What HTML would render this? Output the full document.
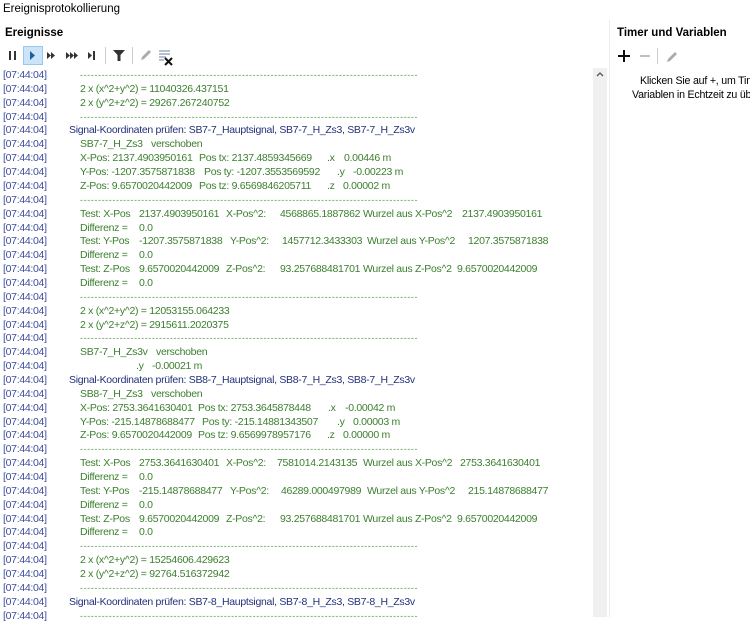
<!DOCTYPE html>
<html><head><meta charset="utf-8">
<style>
*{margin:0;padding:0;box-sizing:border-box}
body{width:750px;height:617px;overflow:hidden;background:#fff;font-family:"Liberation Sans",sans-serif;position:relative;color:#000}
.a{position:absolute;white-space:pre}
.r{position:absolute;left:0;height:14px;line-height:14px;font-size:10.5px;letter-spacing:-0.3px;white-space:pre;width:590px;overflow:hidden}
.r span{position:absolute;top:0}
.t{left:3px;color:#3d4c9c}
.g{color:#3b7f2e}
.n{color:#22307a}
.d{left:80px;color:#5a9a4e;width:338px;overflow:hidden;letter-spacing:0.6px;font-size:9px}
</style></head><body>
<div class="a" style="left:3px;top:3px;font-size:11.5px">Ereignisprotokollierung</div>
<div class="a" style="left:5px;top:27px;font-size:11.5px;font-weight:bold">Ereignisse</div>
<div class="a" style="left:617px;top:27px;font-size:11.5px;font-weight:bold">Timer und Variablen</div>
<div class="a" style="left:609px;top:20px;width:1px;height:597px;background:#ececec"></div>

<svg class="a" style="left:0;top:44px" width="190" height="24">
<rect x="9" y="7" width="2" height="9" fill="#333"/><rect x="14" y="7" width="2" height="9" fill="#333"/>
<rect x="23.5" y="2.5" width="19" height="18" fill="#cce4f7" stroke="#99c9ef"/>
<path d="M30 7 L35 11.5 L30 16Z" fill="#1e5fa0"/>
<path d="M47 8 L51 11.5 L47 15Z M51 8 L55 11.5 L51 15Z" fill="#333"/>
<path d="M66 8 L70 11.5 L66 15Z M70 8 L74 11.5 L70 15Z M74 8 L78 11.5 L74 15Z" fill="#333"/>
<path d="M88 8 L92 11.5 L88 15Z" fill="#333"/><rect x="93" y="7" width="2" height="9" fill="#333"/>
<rect x="105" y="3" width="1" height="17" fill="#ccc"/>
<path d="M113 6 H125 L120.5 11 V17 H117.5 V11Z" fill="#333"/>
<rect x="132" y="3" width="1" height="17" fill="#ccc"/>
<path d="M141 16 L142 13 L149 6 L151 8 L144 15Z" fill="#aaa"/>
<path d="M159 7 H170 M159 10 H170 M159 13 H166 M159 16 H164" stroke="#8a9ab0" stroke-width="1.2"/>
<path d="M165 14 L172 21 M172 14 L165 21" stroke="#111" stroke-width="2"/>
</svg>
<svg class="a" style="left:612px;top:46px" width="70" height="20">
<path d="M12 4 V16 M6 10 H18" stroke="#111" stroke-width="2"/>
<path d="M28 10 H38" stroke="#aaa" stroke-width="1.5"/>
<rect x="45" y="2" width="1" height="16" fill="#ccc"/>
<path d="M55 16 L56 13 L63 6 L65 8 L58 15Z" fill="#aaa"/>
</svg>
<div class="a" style="left:610px;top:70px;width:140px;height:40px;overflow:hidden">
<div class="a" style="left:30px;top:5px;font-size:10.6px;letter-spacing:-0.2px">Klicken Sie auf +, um Timer und</div>
<div class="a" style="left:22px;top:19px;font-size:10.6px;letter-spacing:-0.2px">Variablen in Echtzeit zu überwachen</div>
</div>

<div class="a" style="left:593px;top:68px;width:14px;height:549px;background:#f0f0f0"></div>
<svg class="a" style="left:595px;top:70px" width="10" height="10"><path d="M2 6 L5 3 L8 6" stroke="#555" stroke-width="1.3" fill="none"/></svg>

<div class="r" style="top:68px"><span class="t">[07:44:04]</span><span class="d">----------------------------------------------------------------------------------------------------------------</span></div>
<div class="r" style="top:81.9px"><span class="t">[07:44:04]</span><span class="g" style="left:80px">2 x (x^2+y^2) = 11040326.437151</span></div>
<div class="r" style="top:95.7px"><span class="t">[07:44:04]</span><span class="g" style="left:80px">2 x (y^2+z^2) = 29267.267240752</span></div>
<div class="r" style="top:109.6px"><span class="t">[07:44:04]</span><span class="d">----------------------------------------------------------------------------------------------------------------</span></div>
<div class="r" style="top:123.4px"><span class="t">[07:44:04]</span><span class="n" style="left:69px">Signal-Koordinaten prüfen: SB7-7_Hauptsignal, SB7-7_H_Zs3, SB7-7_H_Zs3v</span></div>
<div class="r" style="top:137.3px"><span class="t">[07:44:04]</span><span class="g" style="left:80px">SB7-7_H_Zs3</span><span class="g" style="left:151px">verschoben</span></div>
<div class="r" style="top:151.2px"><span class="t">[07:44:04]</span><span class="g" style="left:80px">X-Pos: 2137.4903950161</span><span class="g" style="left:199px">Pos tx: 2137.4859345669</span><span class="g" style="left:327px">.x</span><span class="g" style="left:344px">0.00446 m</span></div>
<div class="r" style="top:165px"><span class="t">[07:44:04]</span><span class="g" style="left:80px">Y-Pos: -1207.3575871838</span><span class="g" style="left:204px">Pos ty: -1207.3553569592</span><span class="g" style="left:337px">.y</span><span class="g" style="left:353px">-0.00223 m</span></div>
<div class="r" style="top:178.9px"><span class="t">[07:44:04]</span><span class="g" style="left:80px">Z-Pos: 9.6570020442009</span><span class="g" style="left:199px">Pos tz: 9.6569846205711</span><span class="g" style="left:327px">.z</span><span class="g" style="left:343px">0.00002 m</span></div>
<div class="r" style="top:192.7px"><span class="t">[07:44:04]</span><span class="d">----------------------------------------------------------------------------------------------------------------</span></div>
<div class="r" style="top:206.6px"><span class="t">[07:44:04]</span><span class="g" style="left:80px">Test: X-Pos</span><span class="g" style="left:139px">2137.4903950161</span><span class="g" style="left:226px">X-Pos^2:</span><span class="g" style="left:280px">4568865.1887862</span><span class="g" style="left:363px">Wurzel aus X-Pos^2</span><span class="g" style="left:462px">2137.4903950161</span></div>
<div class="r" style="top:220.5px"><span class="t">[07:44:04]</span><span class="g" style="left:80px">Differenz =</span><span class="g" style="left:139px">0.0</span></div>
<div class="r" style="top:234.3px"><span class="t">[07:44:04]</span><span class="g" style="left:80px">Test: Y-Pos</span><span class="g" style="left:139px">-1207.3575871838</span><span class="g" style="left:230px">Y-Pos^2:</span><span class="g" style="left:282px">1457712.3433303</span><span class="g" style="left:367px">Wurzel aus Y-Pos^2</span><span class="g" style="left:468px">1207.3575871838</span></div>
<div class="r" style="top:248.2px"><span class="t">[07:44:04]</span><span class="g" style="left:80px">Differenz =</span><span class="g" style="left:139px">0.0</span></div>
<div class="r" style="top:262px"><span class="t">[07:44:04]</span><span class="g" style="left:80px">Test: Z-Pos</span><span class="g" style="left:139px">9.6570020442009</span><span class="g" style="left:226px">Z-Pos^2:</span><span class="g" style="left:280px">93.257688481701</span><span class="g" style="left:363px">Wurzel aus Z-Pos^2</span><span class="g" style="left:457px">9.6570020442009</span></div>
<div class="r" style="top:275.9px"><span class="t">[07:44:04]</span><span class="g" style="left:80px">Differenz =</span><span class="g" style="left:139px">0.0</span></div>
<div class="r" style="top:289.8px"><span class="t">[07:44:04]</span><span class="d">----------------------------------------------------------------------------------------------------------------</span></div>
<div class="r" style="top:303.6px"><span class="t">[07:44:04]</span><span class="g" style="left:80px">2 x (x^2+y^2) = 12053155.064233</span></div>
<div class="r" style="top:317.5px"><span class="t">[07:44:04]</span><span class="g" style="left:80px">2 x (y^2+z^2) = 2915611.2020375</span></div>
<div class="r" style="top:331.3px"><span class="t">[07:44:04]</span><span class="d">----------------------------------------------------------------------------------------------------------------</span></div>
<div class="r" style="top:345.2px"><span class="t">[07:44:04]</span><span class="g" style="left:80px">SB7-7_H_Zs3v</span><span class="g" style="left:156px">verschoben</span></div>
<div class="r" style="top:359.1px"><span class="t">[07:44:04]</span><span class="g" style="left:136px">.y</span><span class="g" style="left:152px">-0.00021 m</span></div>
<div class="r" style="top:372.9px"><span class="t">[07:44:04]</span><span class="n" style="left:69px">Signal-Koordinaten prüfen: SB8-7_Hauptsignal, SB8-7_H_Zs3, SB8-7_H_Zs3v</span></div>
<div class="r" style="top:386.8px"><span class="t">[07:44:04]</span><span class="g" style="left:80px">SB8-7_H_Zs3</span><span class="g" style="left:151px">verschoben</span></div>
<div class="r" style="top:400.6px"><span class="t">[07:44:04]</span><span class="g" style="left:80px">X-Pos: 2753.3641630401</span><span class="g" style="left:198px">Pos tx: 2753.3645878448</span><span class="g" style="left:328px">.x</span><span class="g" style="left:345px">-0.00042 m</span></div>
<div class="r" style="top:414.5px"><span class="t">[07:44:04]</span><span class="g" style="left:80px">Y-Pos: -215.14878688477</span><span class="g" style="left:202px">Pos ty: -215.14881343507</span><span class="g" style="left:337px">.y</span><span class="g" style="left:353px">0.00003 m</span></div>
<div class="r" style="top:428.4px"><span class="t">[07:44:04]</span><span class="g" style="left:80px">Z-Pos: 9.6570020442009</span><span class="g" style="left:198px">Pos tz: 9.6569978957176</span><span class="g" style="left:327px">.z</span><span class="g" style="left:343px">0.00000 m</span></div>
<div class="r" style="top:442.2px"><span class="t">[07:44:04]</span><span class="d">----------------------------------------------------------------------------------------------------------------</span></div>
<div class="r" style="top:456.1px"><span class="t">[07:44:04]</span><span class="g" style="left:80px">Test: X-Pos</span><span class="g" style="left:139px">2753.3641630401</span><span class="g" style="left:226px">X-Pos^2:</span><span class="g" style="left:277px">7581014.2143135</span><span class="g" style="left:363px">Wurzel aus X-Pos^2</span><span class="g" style="left:460px">2753.3641630401</span></div>
<div class="r" style="top:469.9px"><span class="t">[07:44:04]</span><span class="g" style="left:80px">Differenz =</span><span class="g" style="left:139px">0.0</span></div>
<div class="r" style="top:483.8px"><span class="t">[07:44:04]</span><span class="g" style="left:80px">Test: Y-Pos</span><span class="g" style="left:139px">-215.14878688477</span><span class="g" style="left:230px">Y-Pos^2:</span><span class="g" style="left:281px">46289.000497989</span><span class="g" style="left:367px">Wurzel aus Y-Pos^2</span><span class="g" style="left:468px">215.14878688477</span></div>
<div class="r" style="top:497.7px"><span class="t">[07:44:04]</span><span class="g" style="left:80px">Differenz =</span><span class="g" style="left:139px">0.0</span></div>
<div class="r" style="top:511.5px"><span class="t">[07:44:04]</span><span class="g" style="left:80px">Test: Z-Pos</span><span class="g" style="left:139px">9.6570020442009</span><span class="g" style="left:226px">Z-Pos^2:</span><span class="g" style="left:280px">93.257688481701</span><span class="g" style="left:363px">Wurzel aus Z-Pos^2</span><span class="g" style="left:457px">9.6570020442009</span></div>
<div class="r" style="top:525.4px"><span class="t">[07:44:04]</span><span class="g" style="left:80px">Differenz =</span><span class="g" style="left:139px">0.0</span></div>
<div class="r" style="top:539.2px"><span class="t">[07:44:04]</span><span class="d">----------------------------------------------------------------------------------------------------------------</span></div>
<div class="r" style="top:553.1px"><span class="t">[07:44:04]</span><span class="g" style="left:80px">2 x (x^2+y^2) = 15254606.429623</span></div>
<div class="r" style="top:566.9px"><span class="t">[07:44:04]</span><span class="g" style="left:80px">2 x (y^2+z^2) = 92764.516372942</span></div>
<div class="r" style="top:580.8px"><span class="t">[07:44:04]</span><span class="d">----------------------------------------------------------------------------------------------------------------</span></div>
<div class="r" style="top:594.7px"><span class="t">[07:44:04]</span><span class="n" style="left:69px">Signal-Koordinaten prüfen: SB7-8_Hauptsignal, SB7-8_H_Zs3, SB7-8_H_Zs3v</span></div>
<div class="r" style="top:608.5px"><span class="t">[07:44:04]</span><span class="d">----------------------------------------------------------------------------------------------------------------</span></div>
</body></html>
